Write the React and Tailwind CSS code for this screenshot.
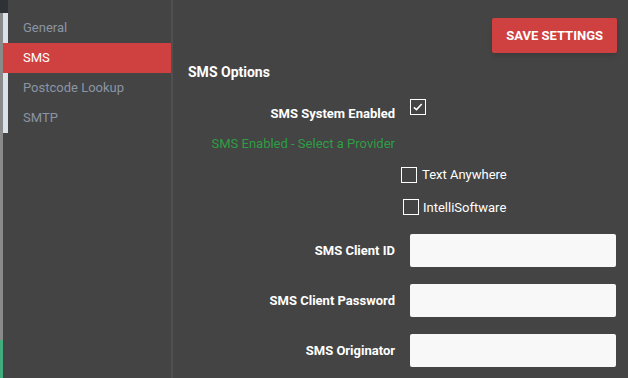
import React, { useState } from "react";

const font = { fontFamily: "Roboto, 'Noto Sans', sans-serif" };

const navItems = ["General", "SMS", "Postcode Lookup", "SMTP"];

const Check = ({ checked, onClick }) => (
  <button
    onClick={onClick}
    className="w-4 h-4 border-[1.5px] border-white flex items-center justify-center"
  >
    {checked && (
      <svg viewBox="0 0 16 16" className="w-3 h-3">
        <path d="M2.5 8.5 L6 11.5 L13 4" fill="none" stroke="white" strokeWidth="2" />
      </svg>
    )}
  </button>
);

const Field = ({ label }) => (
  <div className="flex items-center h-[33px]">
    <div className="w-[222px] text-right text-[13px] font-bold text-white">{label}</div>
    <input className="ml-[15px] w-[206px] h-[33px] bg-[#f8f8f8] rounded-[2px] outline-none" />
  </div>
);

export default function App() {
  const [active, setActive] = useState("SMS");
  const [enabled, setEnabled] = useState(true);
  const [ta, setTa] = useState(false);
  const [intelli, setIntelli] = useState(false);

  return (
    <div className="flex w-[628px] h-[378px] overflow-hidden bg-[#444444]" style={font}>
      <div className="w-[3px] flex flex-col">
        <div className="h-[13px] bg-[#2e3237]" />
        <div className="flex-1 bg-[#8a8a8a]" />
        <div className="h-[38px] bg-[#3fae7c]" />
      </div>

      <div className="w-[170px] flex flex-col border-r-2 border-[#505050]">
        <div className="h-[13px] flex">
          <div className="w-[5px] bg-[#2e3237]" />
        </div>
        {navItems.map((item) => (
          <button
            key={item}
            onClick={() => setActive(item)}
            className={
              active === item
                ? "h-[30px] text-left pl-[15px] text-[13px] text-white bg-[#cf4040] border-l-[5px] border-[#cf4040]"
                : "h-[30px] text-left pl-[15px] text-[13px] text-[#8a95a4] border-l-[5px] border-[#dbe2ea]"
            }
          >
            {item}
          </button>
        ))}
      </div>

      <div className="flex-1 flex flex-col">
        <div className="flex justify-end pt-[18px] pr-[11px]">
          <button className="h-[35px] px-[14px] bg-[#cf4040] rounded-[2px] text-white text-[13px] font-bold uppercase shadow-md">
            Save Settings
          </button>
        </div>
        <div className="pl-[15px] mt-[9px] text-[14px] font-bold text-white">SMS Options</div>

        <div className="flex items-center mt-[21px]">
          <div className="w-[222px] text-right text-[13px] font-bold text-white">SMS System Enabled</div>
          <div className="ml-[15px] -mt-[13px]">
            <Check checked={enabled} onClick={() => setEnabled(!enabled)} />
          </div>
        </div>

        <div className="w-[222px] text-right text-[13px] text-[#2e9e44] mt-[10px]">
          SMS Enabled - Select a Provider
        </div>

        <div className="flex items-center ml-[228px] mt-[12px] gap-[5px]">
          <Check checked={ta} onClick={() => setTa(!ta)} />
          <span className="text-[13px] text-white">Text Anywhere</span>
        </div>
        <div className="flex items-center ml-[230px] mt-[13px] gap-[4px]">
          <Check checked={intelli} onClick={() => setIntelli(!intelli)} />
          <span className="text-[13px] text-white">IntelliSoftware</span>
        </div>

        <div className="flex flex-col gap-[17px] mt-[17px]">
          <Field label="SMS Client ID" />
          <Field label="SMS Client Password" />
          <Field label="SMS Originator" />
        </div>
      </div>
    </div>
  );
}
